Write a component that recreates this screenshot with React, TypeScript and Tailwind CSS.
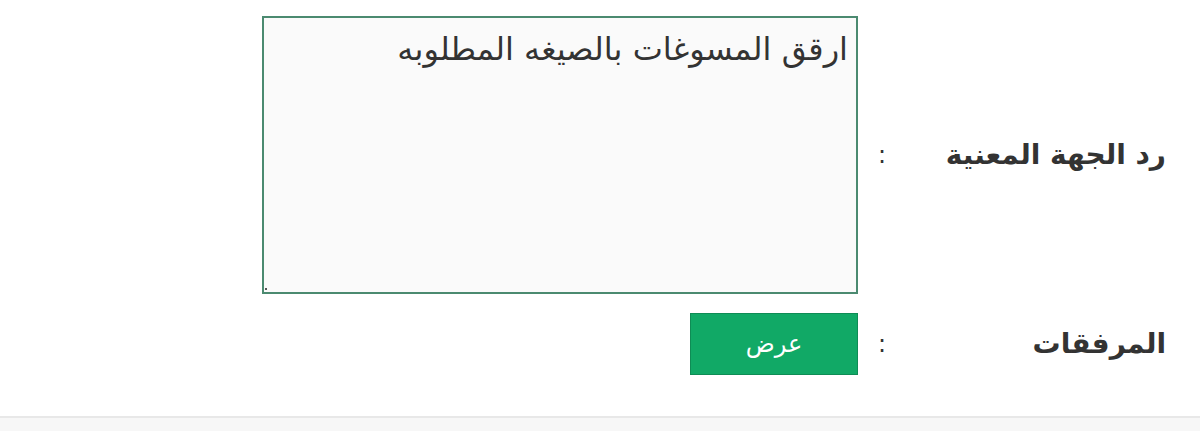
export default function App() {
  return (
    <div dir="rtl" className="w-[1200px] h-[431px] bg-white font-['DejaVu_Sans',sans-serif] text-[#333] overflow-hidden flex flex-col">
      <div className="flex flex-col gap-[19px] pt-4 pr-[34px]">
        {/* reply of the concerned party */}
        <div className="flex items-center">
          <div className="w-[260px] text-[28px] font-bold text-[#333]">رد الجهة المعنية</div>
          <div className="w-[48px] text-center text-[24px] text-[#333]">:</div>
          <div className="relative w-[596px] h-[278px] border-2 border-[#4b8a70] bg-[#fafafa] px-[8px] pt-[6px] text-[32px] leading-[50px] text-[#333]">
            ارقق المسوغات بالصيغه المطلوبه
            <span className="absolute left-[1px] bottom-[2px] w-[2px] h-[2px] bg-[#555]" />
          </div>
        </div>
        {/* attachments */}
        <div className="flex items-center">
          <div className="w-[260px] text-[28px] font-bold text-[#333]">المرفقات</div>
          <div className="w-[48px] text-center text-[24px] text-[#333]">:</div>
          <button className="w-[168px] h-[62px] bg-[#11a966] border border-[#0f8c55] text-white text-[24px]">
            عرض
          </button>
        </div>
      </div>
      <div className="mt-auto h-[15px] border-t-2 border-[#e8e8e8] bg-[#f7f7f7]" />
    </div>
  )
}
